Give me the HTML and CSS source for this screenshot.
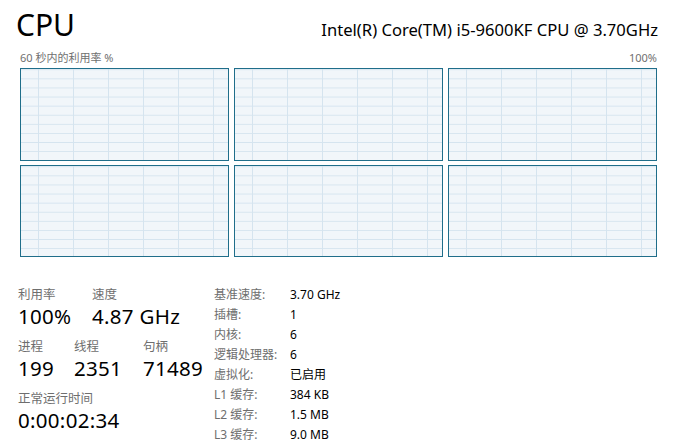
FILE: index.html
```html
<!DOCTYPE html>
<html lang="zh-CN">
<head>
<meta charset="utf-8">
<title>CPU</title>
<link rel="stylesheet" href="styles.css">
</head>
<body>
<div class="page">
  <header class="head">
    <h1 class="title">CPU</h1>
    <div class="model">Intel(R) Core(TM) i5-9600KF CPU @ 3.70GHz</div>
  </header>
  <div class="axis">
    <span>60 秒内的利用率 %</span>
    <span>100%</span>
  </div>
  <div class="graphs">
    <div class="graph"></div>
    <div class="graph"></div>
    <div class="graph"></div>
    <div class="graph"></div>
    <div class="graph"></div>
    <div class="graph"></div>
  </div>
  <div class="stats">
    <div class="left">
      <div class="row">
        <div class="stat w74"><div class="label">利用率</div><div class="value">100%</div></div>
        <div class="stat"><div class="label">速度</div><div class="value">4.87 GHz</div></div>
      </div>
      <div class="row">
        <div class="stat w56"><div class="label">进程</div><div class="value">199</div></div>
        <div class="stat w69"><div class="label">线程</div><div class="value">2351</div></div>
        <div class="stat"><div class="label">句柄</div><div class="value">71489</div></div>
      </div>
      <div class="row">
        <div class="stat"><div class="label">正常运行时间</div><div class="value">0:00:02:34</div></div>
      </div>
    </div>
    <div class="right">
      <div class="k">基准速度:</div><div class="v">3.70 GHz</div>
      <div class="k">插槽:</div><div class="v">1</div>
      <div class="k">内核:</div><div class="v">6</div>
      <div class="k">逻辑处理器:</div><div class="v">6</div>
      <div class="k">虚拟化:</div><div class="v">已启用</div>
      <div class="k">L1 缓存:</div><div class="v">384 KB</div>
      <div class="k">L2 缓存:</div><div class="v">1.5 MB</div>
      <div class="k">L3 缓存:</div><div class="v">9.0 MB</div>
    </div>
  </div>
</div>
</body>
</html>
```
FILE: styles.css
```css
html, body {
  margin: 0;
  padding: 0;
  background: #ffffff;
}
body {
  font-family: "Noto Sans", "Noto Sans CJK SC", sans-serif;
  color: #000000;
  width: 677px;
  height: 443px;
  overflow: hidden;
}
.page {
  display: flex;
  flex-direction: column;
}
.head {
  display: flex;
  justify-content: space-between;
  align-items: baseline;
  padding: 5px 19px 0 16px;
  height: 40px;
}
.title {
  margin: 0;
  font-size: 30px;
  font-weight: 400;
  line-height: 40px;
}
.model {
  font-size: 16.6px;
  line-height: 40px;
}
.axis {
  display: flex;
  justify-content: space-between;
  padding: 6px 20px 0 20px;
  height: 14px;
  font-size: 11px;
  line-height: 14px;
  color: #707070;
}
.graphs {
  margin: 3px 20px 0 20px;
  display: grid;
  grid-template-columns: repeat(3, 1fr);
  grid-template-rows: 93px 92px;
  column-gap: 4.5px;
  row-gap: 4px;
}
.graph {
  border: 1px solid #1f6e8a;
  background-color: #f1f6fa;
  background-image:
    linear-gradient(to right, #d5e4ef 1px, transparent 1px),
    linear-gradient(to bottom, #d5e4ef 1px, transparent 1px);
  background-size: 35px 100%, 100% 9.1px;
  background-position: 17px 0, 0 9.4px;
}
.stats {
  margin-top: 28px;
  display: flex;
  padding-left: 18px;
}
.left {
  width: 196px;
  padding-top: 2px;
  display: flex;
  flex-direction: column;
  gap: 10px;
}
.row {
  display: flex;
}
.w74 { width: 74px; }
.w56 { width: 56px; }
.w69 { width: 69px; }
.label {
  font-size: 12.5px;
  line-height: 16px;
  color: #6e6e6e;
}
.value {
  font-size: 20.5px;
  line-height: 26px;
  letter-spacing: 0.3px;
  white-space: nowrap;
}
.right {
  display: grid;
  grid-template-columns: 76px auto;
  grid-auto-rows: 20px;
  font-size: 12px;
  line-height: 20px;
}
.k {
  color: #6e6e6e;
}
.v {
  color: #000000;
}
```
